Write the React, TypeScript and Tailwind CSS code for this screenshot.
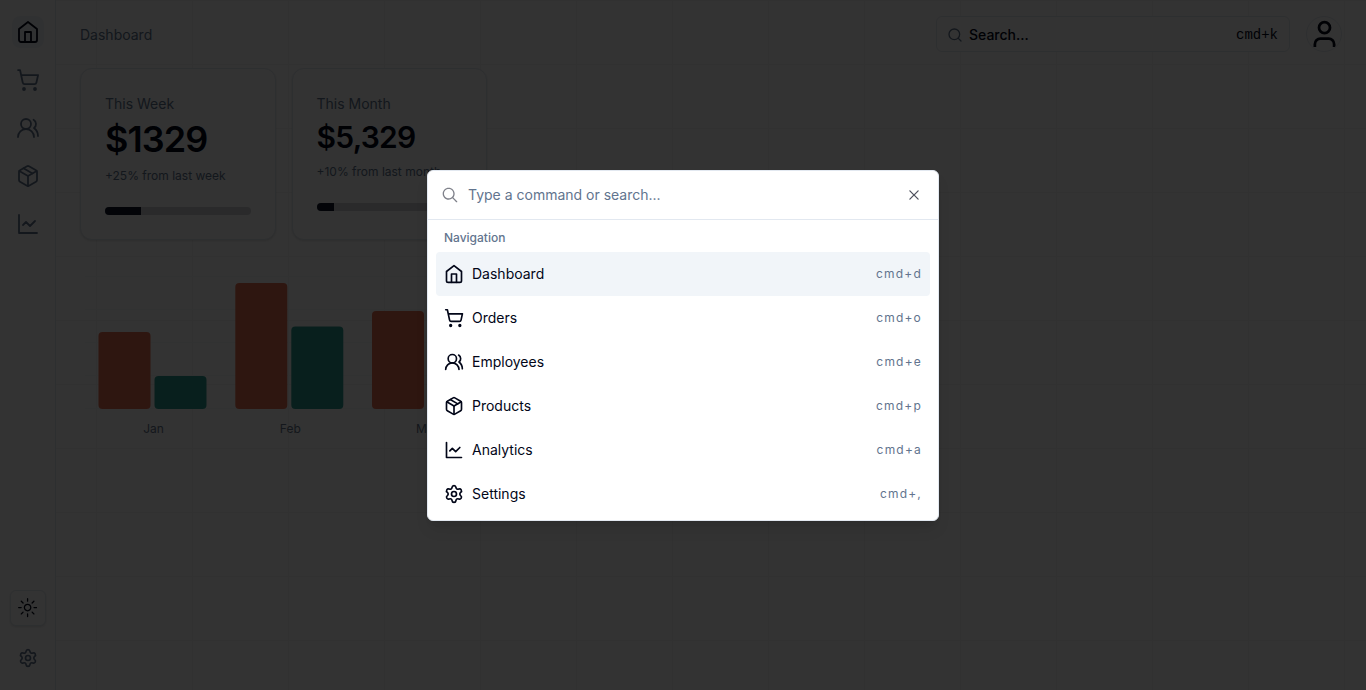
import React from "react";
import { UsersRound, ShoppingCart, Package, Settings, Search } from "lucide-react";
import { RxCross2, RxMagnifyingGlass, RxSun } from "react-icons/rx";

const inter = "font-['Inter',sans-serif]";

type IconProps = { size?: number; className?: string; strokeWidth?: number };

function HomeIcon({ size = 24, className = "", strokeWidth = 2 }: IconProps) {
  return (
    <svg width={size} height={size} viewBox="0 0 24 24" fill="none" stroke="currentColor" strokeWidth={strokeWidth} strokeLinecap="round" strokeLinejoin="round" className={className}>
      <path d="m3 9 9-7 9 7v11a2 2 0 0 1-2 2H5a2 2 0 0 1-2-2z" />
      <polyline points="9 22 9 12 15 12 15 22" />
    </svg>
  );
}

function LineChartIcon({ size = 24, className = "", strokeWidth = 2 }: IconProps) {
  return (
    <svg width={size} height={size} viewBox="0 0 24 24" fill="none" stroke="currentColor" strokeWidth={strokeWidth} strokeLinecap="round" strokeLinejoin="round" className={className}>
      <path d="M3 3v18h18" />
      <path d="m19 9-5 5-4-4-3 3" />
    </svg>
  );
}

function UserIcon() {
  return (
    <svg width="33" height="33" viewBox="0 0 24 24" fill="none" stroke="currentColor" strokeWidth="2" className="shrink-0">
      <path d="M19 21v-2a4 4 0 0 0-4-4H9a4 4 0 0 0-4 4v2" />
      <circle cx="12" cy="7" r="4" />
    </svg>
  );
}

const nav = [
  { label: "Dashboard", keys: "cmd+d", Icon: HomeIcon },
  { label: "Orders", keys: "cmd+o", Icon: ShoppingCart },
  { label: "Employees", keys: "cmd+e", Icon: UsersRound },
  { label: "Products", keys: "cmd+p", Icon: Package },
  { label: "Analytics", keys: "cmd+a", Icon: LineChartIcon },
  { label: "Settings", keys: "cmd+,", Icon: Settings },
];

function Sidebar() {
  return (
    <aside className="flex w-14 shrink-0 flex-col items-center justify-between border-r border-slate-200 bg-white py-4">
      <nav className="flex flex-col gap-4">
        {nav.slice(0, 5).map(({ label, Icon }, i) => (
          <a key={label} className={i === 0 ? "flex size-8 items-center justify-center rounded-lg bg-slate-100 text-slate-950" : "flex size-8 items-center justify-center rounded-lg text-slate-500"}>
            <Icon size={24} strokeWidth={1.8} />
          </a>
        ))}
      </nav>
      <div className="flex flex-col items-center gap-4">
        <button className="flex size-9 items-center justify-center rounded-md border border-slate-200 bg-white shadow-sm">
          <RxSun size={19.2} />
        </button>
        <a className="flex size-8 items-center justify-center text-slate-500">
          <Settings size={20} />
        </a>
      </div>
    </aside>
  );
}

function StatCard({ title, value, note, big, fill }: { title: string; value: string; note: string; big?: boolean; fill: number }) {
  return (
    <div className="h-[172px] w-[195.5px] rounded-xl border border-slate-200 bg-white p-6 shadow">
      <p className="text-sm leading-[22px] text-slate-500">{title}</p>
      <p className={big ? "mt-1 text-4xl leading-10 font-semibold tracking-tight" : "mt-1 text-3xl leading-9 font-semibold tracking-tight"}>{value}</p>
      <p className="mt-2 pt-px text-xs leading-[15px] whitespace-nowrap text-slate-500">{note}</p>
      <div className="mt-6 h-2 overflow-hidden rounded-full bg-slate-900/20">
        <div className="h-full bg-slate-900" style={{ width: `${fill}%` }} />
      </div>
    </div>
  );
}

const bars = [
  { label: "Jan", x: 98.5, a: 77, b: 33 },
  { label: "Feb", x: 235.3, a: 126, b: 82.5 },
  { label: "Mar", x: 372, a: 98, b: 50 },
];

function Chart() {
  return (
    <svg width="407" height="190" viewBox="80 260 407 190" className="block">
      {[277, 310, 343, 376, 409].map((y) => (
        <line key={y} x1="85" x2="487" y1={y - 0.5} y2={y - 0.5} stroke="#f5f7fa" />
      ))}
      {bars.map((b) => (
        <g key={b.label}>
          <rect x={b.x} y={409 - b.a} width="52" height={b.a} rx="4" fill="#e76e50" />
          <rect x={b.x + 56} y={409 - b.b} width="52" height={b.b} rx="4" fill="#2a9d90" />
          <text x={b.x + 55} y="433" textAnchor="middle" fontSize="12" fill="#64748b">{b.label}</text>
        </g>
      ))}
    </svg>
  );
}

function CommandPalette() {
  return (
    <div className="flex h-[351px] w-[512px] flex-col overflow-hidden rounded-md border border-slate-200 bg-white shadow-lg">
      <div className="flex h-[49px] shrink-0 items-center border-b border-slate-200 px-3">
        <RxMagnifyingGlass size={20} className="mr-2 shrink-0 text-slate-950 opacity-50" />
        <span className="flex-1 text-sm text-slate-500">Type a command or search...</span>
        <RxCross2 size={16} className="mr-1 opacity-70" />
      </div>
      <div className="px-2 pt-[5px]">
        <p className="px-2 pt-[5px] pb-1.5 text-xs leading-4 font-medium text-slate-500">Navigation</p>
        {nav.map(({ label, keys, Icon }, i) => (
          <div key={label} className={i === 0 ? "flex h-11 items-center rounded bg-slate-100 px-2" : "flex h-11 items-center rounded px-2"}>
            <Icon size={20} className="mr-2" />
            <span className="flex-1 text-sm">{label}</span>
            <span className="text-xs tracking-widest text-slate-500">{keys}</span>
          </div>
        ))}
      </div>
    </div>
  );
}

export default function App() {
  return (
    <div className={`relative flex h-[690px] overflow-hidden bg-white text-slate-950 antialiased ${inter}`}>
      <div className="flex flex-1 bg-[linear-gradient(to_right,#f5f5f5_1px,transparent_1px),linear-gradient(to_bottom,#f5f5f5_1px,transparent_1px)] bg-[size:96px_64px]">
        <Sidebar />
        <main className="flex-1 px-6 pt-4">
          <header className="flex h-9 items-center">
            <span className="flex-1 pt-0.5 text-sm text-slate-500">Dashboard</span>
            <div className="flex h-9 w-[354px] items-center rounded-md border border-slate-200 bg-white pt-0.5 pr-[11px] pl-2.5">
              <Search size={16} className="mr-1.5 text-slate-500" />
              <span className="flex-1 text-sm font-medium">Search...</span>
              <kbd className="font-['Liberation_Mono',monospace] text-sm">cmd+k</kbd>
            </div>
            <div className="ml-4 flex size-9 items-center justify-center overflow-hidden rounded-full border border-slate-200 bg-white">
              <UserIcon />
            </div>
          </header>
          <section className="mt-4 flex gap-4">
            <StatCard title="This Week" value="$1329" note="+25% from last week" big fill={25} />
            <StatCard title="This Month" value="$5,329" note="+10% from last month" fill={12} />
          </section>
          <section className="mt-5">
            <Chart />
          </section>
        </main>
      </div>
      <div className="absolute inset-0 flex items-center justify-center bg-black/80">
        <CommandPalette />
      </div>
    </div>
  );
}
